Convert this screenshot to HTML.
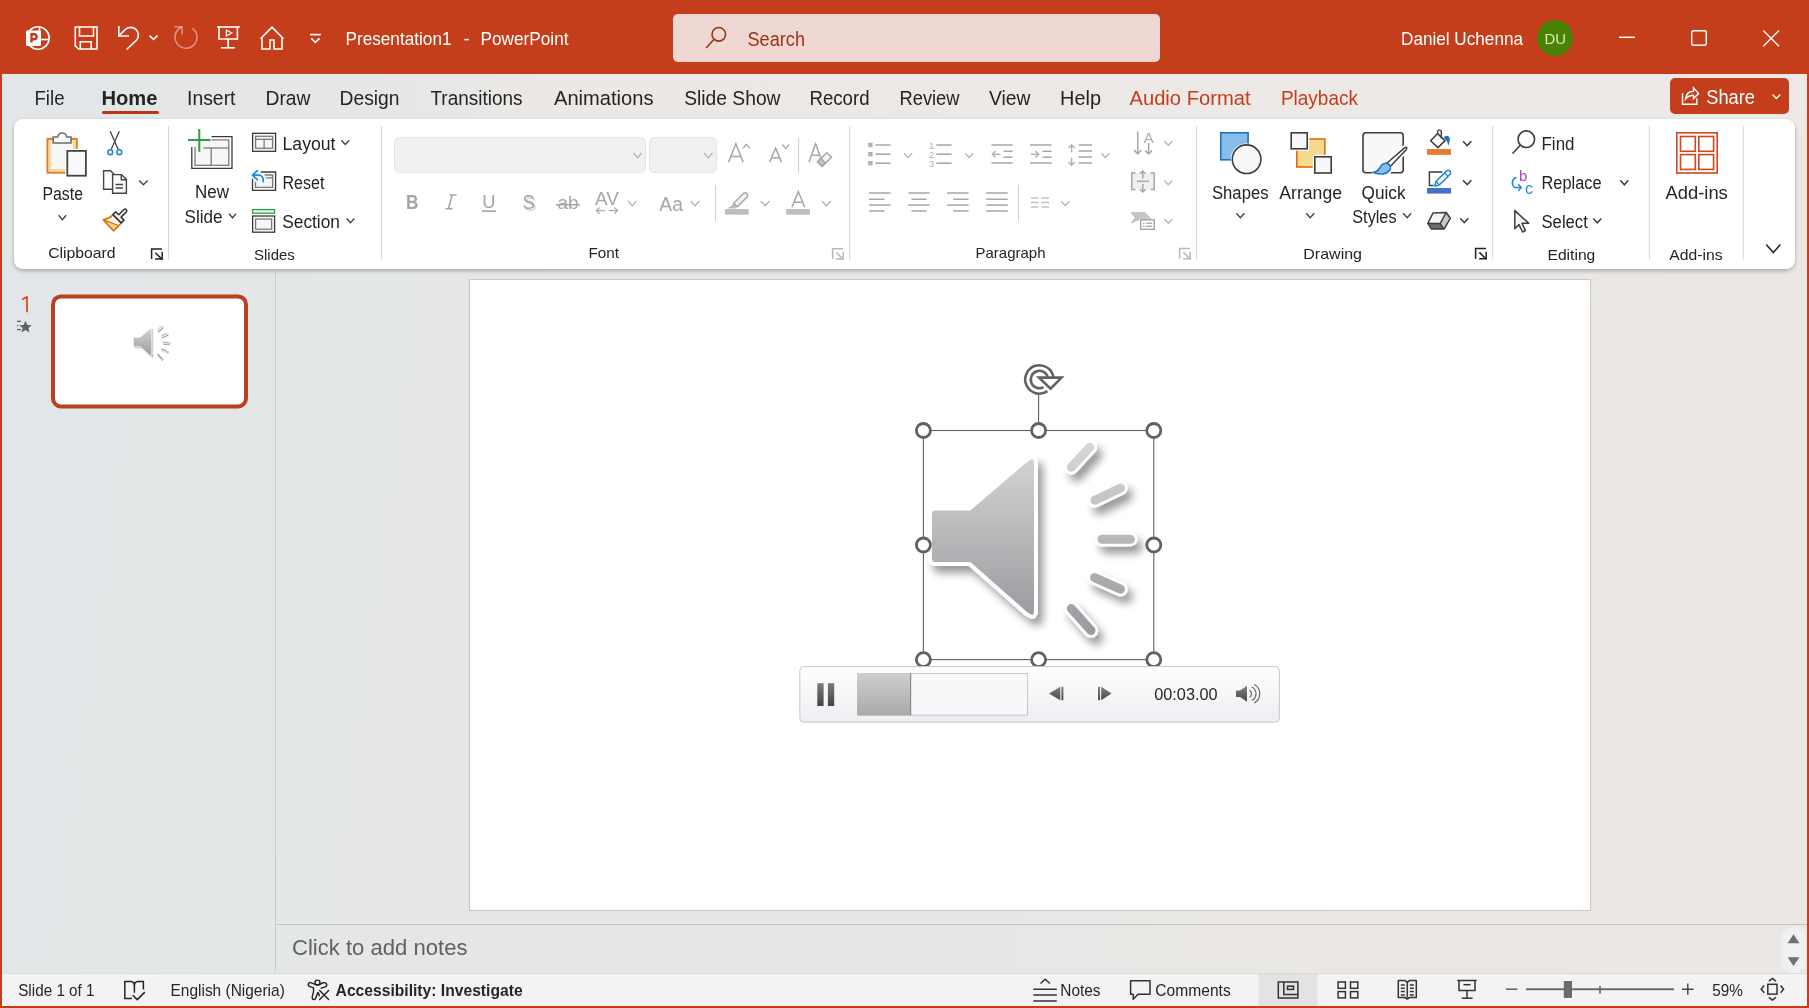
<!DOCTYPE html>
<html><head><meta charset="utf-8"><style>
html,body{margin:0;padding:0;width:1809px;height:1008px;overflow:hidden;background:#e4e6e7;}
svg{display:block;font-family:"Liberation Sans", sans-serif;will-change:transform;}
</style></head><body>
<svg width="1809" height="1008" viewBox="0 0 1809 1008">

<defs>
  <linearGradient id="bgMain" x1="0" y1="0" x2="1" y2="0.08">
    <stop offset="0" stop-color="#e2e6e8"/>
    <stop offset="0.3" stop-color="#e5e7e7"/>
    <stop offset="0.62" stop-color="#e9e7e5"/>
    <stop offset="1" stop-color="#eae7e4"/>
  </linearGradient>
  <linearGradient id="bgTabs" x1="0" y1="0" x2="1" y2="0">
    <stop offset="0" stop-color="#e2e6e8"/>
    <stop offset="0.15" stop-color="#e5e6e7"/>
    <stop offset="0.3" stop-color="#ebe8e5"/>
    <stop offset="1" stop-color="#ede9e6"/>
  </linearGradient>
  <filter id="panelShadow" x="-5%" y="-20%" width="110%" height="140%">
    <feGaussianBlur in="SourceAlpha" stdDeviation="2.2"/>
    <feOffset dy="2" result="b"/>
    <feComponentTransfer><feFuncA type="linear" slope="0.28"/></feComponentTransfer>
    <feMerge><feMergeNode/><feMergeNode in="SourceGraphic"/></feMerge>
  </filter>
</defs>
<rect x="0" y="0" width="1809" height="1008" fill="url(#bgMain)"/>
<rect x="0" y="74" width="1809" height="60" fill="url(#bgTabs)"/>
<rect x="0" y="0" width="1809" height="74" fill="#c43e1c"/>
<!-- ribbon panel -->
<rect x="14" y="119" width="1781" height="150" rx="9" ry="9" fill="#ffffff" filter="url(#panelShadow)"/>
<!-- slide panel splitter -->
<rect x="275" y="271" width="1" height="700" fill="#c9c9c9"/>
<!-- notes separator -->
<rect x="277" y="924" width="1530" height="1" fill="#c4c4c4"/>
<!-- status bar -->
<rect x="0" y="973" width="1809" height="1" fill="#dcdcdc"/>
<rect x="0" y="974" width="1809" height="34" fill="#f3f3f3"/>
<!-- scroll arrows bg -->
<rect x="1781" y="927" width="25" height="46" rx="12" fill="#f0f0f0"/>
<!-- window border -->
<rect x="0" y="0" width="2" height="1008" fill="#c43e1c"/>
<rect x="1807" y="0" width="2" height="1008" fill="#c43e1c"/>
<rect x="0" y="1006" width="1809" height="2" fill="#c43e1c"/>

<g fill="none" stroke="#fff" stroke-width="1.6"><circle cx="38" cy="38" r="11.2"/><line x1="39.5" y1="27" x2="39.5" y2="39.5"/><line x1="39.5" y1="39.5" x2="49" y2="39.5"/></g>
<rect x="26" y="30.5" width="15" height="15.5" rx="1.2" fill="#fff"/>
<path d="M31.5 42.6 V34.3 H34.2 A2.45 2.45 0 0 1 34.2 39.2 H31.5" fill="none" stroke="#c43e1c" stroke-width="2.4"/>
<g fill="none" stroke="#fff" stroke-width="1.6"><path d="M75.3 27 H97 V49 H78.5 L75.3 45.8 Z"/><path d="M79.5 27 V36 H93.5 V27"/><path d="M80.3 49 V41.8 H91.2 V49"/></g>
<g fill="none" stroke="#fff" stroke-width="1.6"><path d="M118.8 26 V36 H129"/><path d="M119.5 35.3 L125 29.8 A7.6 7.6 0 0 1 136.3 40.4 L126.5 49.5"/><path d="M149.5 35.6 L153.5 39.4 L157.5 35.6"/></g>
<g fill="none" stroke="#fff" stroke-opacity="0.45" stroke-width="1.5"><path d="M192.4 28.3 A11 11 0 1 1 181.5 27.2"/><path d="M174.3 26.8 H182 V34.6"/></g>
<g fill="none" stroke="#fff" stroke-width="1.6"><path d="M217 27 H239.8"/><path d="M219 27 V39 H237.4 V27"/><path d="M228.2 39 V47.8"/><path d="M221 47.8 H234.8"/><path d="M226.4 30 L231.8 33 L226.4 36 Z" stroke-width="1.3"/></g>
<g fill="none" stroke="#fff" stroke-width="1.6"><path d="M260.5 38.8 L272 27.2 L283.5 38.8"/><path d="M262 37.5 V49 H270 V40 H274 V49 H282 V37.5"/></g>
<g fill="none" stroke="#fff" stroke-width="1.6"><path d="M310 34.6 H320.8"/><path d="M311.3 38.4 L315.4 42.3 L319.5 38.4"/></g>
<text x="345.5" y="45.2" font-size="19" fill="#ffffff" textLength="106.0" lengthAdjust="spacingAndGlyphs">Presentation1</text>
<text x="463.5" y="45.2" font-size="19" fill="#ffffff" textLength="6.0" lengthAdjust="spacingAndGlyphs">-</text>
<text x="480.5" y="45.2" font-size="19" fill="#ffffff" textLength="88.0" lengthAdjust="spacingAndGlyphs">PowerPoint</text>
<rect x="673" y="14" width="487" height="48" rx="5" fill="#efd8d3"/>
<g fill="none" stroke="#9c3317" stroke-width="1.6"><circle cx="718.8" cy="34.3" r="6.8"/><path d="M714 39.3 L706.2 48"/></g>
<text x="747.5" y="45.9" font-size="20" fill="#9c3317" textLength="57.5" lengthAdjust="spacingAndGlyphs">Search</text>
<text x="1401.0" y="45.2" font-size="19" fill="#ffffff" textLength="122.0" lengthAdjust="spacingAndGlyphs">Daniel Uchenna</text>
<circle cx="1555" cy="38" r="18" fill="#498205"/>
<text x="1544.5" y="44.2" font-size="15.5" fill="#d8ecb9" textLength="21.5" lengthAdjust="spacingAndGlyphs">DU</text>
<g fill="none" stroke="#fff" stroke-width="1.4"><path d="M1619 37.3 H1635"/><rect x="1691.7" y="30.7" width="14.6" height="14.6" rx="2"/><path d="M1763.3 30.5 L1779 46.2 M1779 30.5 L1763.3 46.2"/></g>
<text x="34.5" y="105.3" font-size="20.5" fill="#242424" textLength="30.0" lengthAdjust="spacingAndGlyphs">File</text>
<text x="101.5" y="105.3" font-size="20.5" fill="#242424" font-weight="bold" textLength="56.0" lengthAdjust="spacingAndGlyphs">Home</text>
<text x="187.0" y="105.3" font-size="20.5" fill="#242424" textLength="48.5" lengthAdjust="spacingAndGlyphs">Insert</text>
<text x="265.5" y="105.3" font-size="20.5" fill="#242424" textLength="45.0" lengthAdjust="spacingAndGlyphs">Draw</text>
<text x="339.5" y="105.3" font-size="20.5" fill="#242424" textLength="60.0" lengthAdjust="spacingAndGlyphs">Design</text>
<text x="430.5" y="105.3" font-size="20.5" fill="#242424" textLength="92.0" lengthAdjust="spacingAndGlyphs">Transitions</text>
<text x="554.0" y="105.3" font-size="20.5" fill="#242424" textLength="99.5" lengthAdjust="spacingAndGlyphs">Animations</text>
<text x="684.2" y="105.3" font-size="20.5" fill="#242424" textLength="96.3" lengthAdjust="spacingAndGlyphs">Slide Show</text>
<text x="809.5" y="105.3" font-size="20.5" fill="#242424" textLength="60.0" lengthAdjust="spacingAndGlyphs">Record</text>
<text x="899.5" y="105.3" font-size="20.5" fill="#242424" textLength="60.0" lengthAdjust="spacingAndGlyphs">Review</text>
<text x="989.0" y="105.3" font-size="20.5" fill="#242424" textLength="41.5" lengthAdjust="spacingAndGlyphs">View</text>
<text x="1060.1" y="105.3" font-size="20.5" fill="#242424" textLength="40.9" lengthAdjust="spacingAndGlyphs">Help</text>
<text x="1129.5" y="105.3" font-size="20.5" fill="#c43e1c" textLength="121.0" lengthAdjust="spacingAndGlyphs">Audio Format</text>
<text x="1280.9" y="105.3" font-size="20.5" fill="#c43e1c" textLength="77.1" lengthAdjust="spacingAndGlyphs">Playback</text>
<rect x="102" y="111" width="57" height="3" rx="1.5" fill="#b8361a"/>
<rect x="1670" y="78" width="119" height="36" rx="5" fill="#c43e1c"/>
<g fill="none" stroke="#fff" stroke-width="1.4"><path d="M1682.5 93.3 V104.3 H1696.8 V98.2"/><path d="M1685.5 99 C1686.2 93.8 1689.5 91.2 1693.5 91.2 V87.8 L1698.6 93.6 L1693.5 98.5 V95.2 C1690.2 95.2 1687.6 96.4 1685.5 99 Z"/><path d="M1772.5 94.5 L1776.4 98.6 L1780.3 94.5"/></g>
<text x="1706.3" y="103.9" font-size="20.5" fill="#ffffff" textLength="48.7" lengthAdjust="spacingAndGlyphs">Share</text>
<rect x="47.5" y="138.9" width="29.2" height="33.7" fill="#f7f7f7" stroke="#e07a1f" stroke-width="2"/>
<rect x="50" y="141.4" width="24.2" height="28.7" fill="none" stroke="#f8d998" stroke-width="2.4"/>
<path d="M53.2 143 V137 H57.6 A4.6 4.6 0 0 1 66.7 137 H71 V143 Z" fill="#f8f8f8" stroke="#6a6a6a" stroke-width="1.5"/>
<rect x="67.3" y="150.9" width="18.6" height="24.8" fill="#f9f9f9" stroke="#ffffff" stroke-width="4"/><rect x="67.3" y="150.9" width="18.6" height="24.8" fill="#f9f9f9" stroke="#444" stroke-width="1.8"/>
<text x="42.5" y="200.4" font-size="17.5" fill="#242424" textLength="40.5" lengthAdjust="spacingAndGlyphs">Paste</text>
<path d="M58.6 215.3 L62.400000000000006 219.7 L66.2 215.3" fill="none" stroke="#444" stroke-width="1.4"/>
<g fill="none" stroke="#444" stroke-width="1.3"><path d="M110.2 131.2 L118.2 149.6"/><path d="M119.3 131.2 L111.2 149.6"/></g>
<g fill="none" stroke="#1f88d6" stroke-width="1.6"><circle cx="110.3" cy="152.2" r="2.4"/><circle cx="119.3" cy="152.2" r="2.4"/></g>
<g fill="none" stroke="#444" stroke-width="1.4"><path d="M112.5 189.3 H103.6 V170.8 H110.6 L114.3 174.5"/><path d="M112.6 174.6 H121.6 L126.4 179.4 V193.3 H112.6 Z" fill="#fafafa"/><path d="M121.3 174.8 V179.7 H126.2"/><path d="M115.5 184.5 H123 M115.5 188 H123"/></g>
<path d="M139.2 180.5 L143.39999999999998 184.8 L147.6 180.5" fill="none" stroke="#444" stroke-width="1.4"/>
<path d="M113 214.8 Q108.5 219 103.3 219.7 L113.6 230.8 L121.3 223 Z" fill="#ffffff" stroke="#e2720e" stroke-width="1.6" stroke-linejoin="round"/>
<path d="M103.5 219.9 L118.8 225.6 L113.6 230.8 Z" fill="#f8dc8c" stroke="#e2720e" stroke-width="1.5" stroke-linejoin="round"/>
<path d="M112.9 214.6 L115.7 211.8 L118.65 214.75 L123.95 209.45 A1.7 1.7 0 0 1 126.35 211.85 L121.05 217.15 L124 220.1 L121.2 222.9 Z" fill="#f6f6f6" stroke="#333" stroke-width="1.5" stroke-linejoin="round"/>
<text x="48.2" y="258.4" font-size="15" fill="#242424" textLength="67.4" lengthAdjust="spacingAndGlyphs">Clipboard</text>
<g fill="none" stroke="#222222" stroke-width="1.5" stroke-linecap="square"><path d="M161.2 248.9 H151.6 V258.3"/><path d="M155.9 253.20000000000002 L161.8 259.1"/><path d="M162.2 252.70000000000002 V259.1 H155.9"/></g>
<rect x="168.0" y="126" width="1" height="134" fill="#d6d6d6"/>
<rect x="195" y="139.8" width="33.8" height="25.5" fill="#f6f6f6"/>
<path d="M211.5 136.7 H232 V168.4 H191.8 V147" fill="none" stroke="#3a3a3a" stroke-width="1.3"/>
<g fill="none" stroke="#7a7a7a" stroke-width="1.3"><path d="M211.5 139.8 H228.8 V165.3 H195 V147"/><path d="M203.5 148 H228.8"/><path d="M211.2 148 V165.3"/></g>
<g stroke="#2f9e47" stroke-width="2"><path d="M199.3 129 V151.8"/><path d="M188 140 H210.5"/></g>
<text x="195.0" y="198.4" font-size="17.5" fill="#242424" textLength="34.0" lengthAdjust="spacingAndGlyphs">New</text>
<text x="184.5" y="222.7" font-size="17.5" fill="#242424" textLength="38.0" lengthAdjust="spacingAndGlyphs">Slide</text>
<path d="M229 213.6 L232.5 217.8 L236 213.6" fill="none" stroke="#444" stroke-width="1.4"/>
<rect x="252.6" y="133.3" width="23" height="18" fill="#f6f6f6" stroke="#3a3a3a" stroke-width="1.3"/>
<g fill="none" stroke="#7a7a7a" stroke-width="1.3"><rect x="255.6" y="136.3" width="17" height="12"/><path d="M255.6 139.3 H272.6"/><path d="M264.1 139.3 V148.3"/></g>
<text x="282.5" y="149.8" font-size="17.5" fill="#242424" textLength="53.0" lengthAdjust="spacingAndGlyphs">Layout</text>
<path d="M341.3 140.2 L345.25 144.4 L349.2 140.2" fill="none" stroke="#444" stroke-width="1.4"/>
<rect x="253" y="172.5" width="22" height="17.5" fill="#f6f6f6"/>
<path d="M260.8 172 H275.6 V190.3 H252.5 V178.8" fill="none" stroke="#3a3a3a" stroke-width="1.3"/>
<path d="M264.7 175 H272.6 V187.3 H255.5 V181.8 M266.2 177.9 H272.6" fill="none" stroke="#7a7a7a" stroke-width="1.3"/>
<rect x="251" y="168" width="13" height="14" fill="#ffffff" transform="rotate(0)" opacity="0"/>
<g fill="none" stroke="#1f88d6" stroke-width="1.7" stroke-linecap="round" stroke-linejoin="round"><path d="M257.3 170.6 L252.5 175.2 L257.3 179.7"/><path d="M252.8 175.2 H259 A4.3 4.3 0 0 1 263.2 179.5 V181.6"/></g>
<text x="282.5" y="188.8" font-size="17.5" fill="#242424" textLength="42.0" lengthAdjust="spacingAndGlyphs">Reset</text>
<rect x="252.6" y="209.6" width="22" height="3.6" fill="#f6f6f6" stroke="#2f9e47" stroke-width="1.3"/>
<rect x="252.6" y="216" width="22" height="16.2" fill="#f6f6f6" stroke="#3a3a3a" stroke-width="1.3"/>
<rect x="255.6" y="219" width="16" height="10.2" fill="none" stroke="#7a7a7a" stroke-width="1.3"/>
<text x="282.2" y="227.5" font-size="17.5" fill="#242424" textLength="57.8" lengthAdjust="spacingAndGlyphs">Section</text>
<path d="M346.6 218.6 L350.5 222.8 L354.4 218.6" fill="none" stroke="#444" stroke-width="1.4"/>
<text x="254.0" y="260.0" font-size="15" fill="#242424" textLength="40.8" lengthAdjust="spacingAndGlyphs">Slides</text>
<rect x="381.0" y="126" width="1" height="134" fill="#d6d6d6"/>
<rect x="394.5" y="137.5" width="251" height="35" rx="5" fill="#f0f0f0" stroke="#e3e3e3" stroke-width="1"/>
<path d="M633.6 153 L637.6 157.8 L641.6 153" fill="none" stroke="#b4b4b4" stroke-width="1.3"/>
<rect x="649.5" y="137.5" width="67" height="35" rx="5" fill="#f0f0f0" stroke="#e3e3e3" stroke-width="1"/>
<path d="M704.2 153 L708.3 157.8 L712.4 153" fill="none" stroke="#b4b4b4" stroke-width="1.3"/>
<path d="M728.50 162.30 L735.85 143.80 L743.20 162.30 M730.85 156.38 H740.85" fill="none" stroke="#a6a6a6" stroke-width="1.5" stroke-linejoin="miter"/>
<path d="M743 148.4 L746.4 144.3 L749.8 148.4" fill="none" stroke="#a6a6a6" stroke-width="1.3"/>
<path d="M769.60 162.30 L775.60 148.20 L781.60 162.30 M771.52 157.79 H779.68" fill="none" stroke="#a6a6a6" stroke-width="1.5" stroke-linejoin="miter"/>
<path d="M782.3 144.4 L785.8 148.6 L789.3 144.4" fill="none" stroke="#a6a6a6" stroke-width="1.3"/>
<rect x="798.1" y="137" width="1" height="35.599999999999994" fill="#d0d0d0"/>
<path d="M809 162.3 L815.6 143.8 L820.6 157.5 M811.8 155.3 H820.2" fill="none" stroke="#a6a6a6" stroke-width="1.5"/>
<path d="M817.5 161.8 L826.7 152.7 L831.7 157.3 L822.1 166.4 Z" fill="#f4f4f4" stroke="#a6a6a6" stroke-width="1.5" stroke-linejoin="round"/>
<path d="M817.5 161.8 L820.9 158.4 L825.5 163 L822.1 166.4 Z" fill="#c4c4c4" stroke="#a6a6a6" stroke-width="1.5" stroke-linejoin="round"/>
<text x="406.0" y="209.3" font-size="21" fill="#a6a6a6" font-weight="bold" textLength="12.5" lengthAdjust="spacingAndGlyphs">B</text>
<path d="M452.2 195.4 L448.4 208.4 M449.7 195 H456.7 M445.6 208.8 H452.6" fill="none" stroke="#a6a6a6" stroke-width="1.6"/>
<text x="482.3" y="208.3" font-size="19" fill="#a6a6a6" textLength="13.2" lengthAdjust="spacingAndGlyphs">U</text>
<rect x="482" y="210.3" width="14" height="1.6" fill="#a6a6a6"/>
<text x="524.0" y="210.8" font-size="21" fill="#d3d3d3" textLength="12.5" lengthAdjust="spacingAndGlyphs">S</text>
<text x="522.6" y="209.3" font-size="21" fill="#a6a6a6" textLength="12.4" lengthAdjust="spacingAndGlyphs">S</text>
<text x="557.5" y="209.3" font-size="18" fill="#a6a6a6" textLength="21.0" lengthAdjust="spacingAndGlyphs">ab</text>
<rect x="556" y="204" width="24" height="1.5" fill="#a6a6a6"/>
<text x="595.0" y="205.3" font-size="19" fill="#a6a6a6" textLength="23.7" lengthAdjust="spacingAndGlyphs">AV</text>
<g fill="none" stroke="#b0b0b0" stroke-width="1.4"><path d="M596.5 210.6 H605"/><path d="M599.6 207.5 L596.5 210.6 L599.6 213.7"/><path d="M609 210.6 H617.5"/><path d="M614.4 207.5 L617.5 210.6 L614.4 213.7"/></g>
<path d="M628.2 201 L632.3 205.8 L636.4 201" fill="none" stroke="#b4b4b4" stroke-width="1.3"/>
<text x="659.3" y="210.6" font-size="20" fill="#a6a6a6" textLength="23.7" lengthAdjust="spacingAndGlyphs">Aa</text>
<path d="M690.8 201 L695.0999999999999 205.8 L699.4 201" fill="none" stroke="#b4b4b4" stroke-width="1.3"/>
<rect x="715.1" y="185" width="1" height="36" fill="#d0d0d0"/>
<rect x="725" y="209" width="23.7" height="5.6" fill="#bdbdbd"/>
<path d="M733.7 203.2 L737.3 206.8 L735 208.6 H727.5 Z" fill="#c0c0c0"/>
<path d="M733.7 203.2 L743.7 193.2 A2.6 2.6 0 0 1 747.3 196.8 L737.3 206.8 Z" fill="#f4f4f4" stroke="#a6a6a6" stroke-width="1.5" stroke-linejoin="round"/>
<path d="M760.8 201 L765.2 205.8 L769.6 201" fill="none" stroke="#b4b4b4" stroke-width="1.3"/>
<path d="M791.80 207.30 L798.30 191.60 L804.80 207.30 M793.88 202.28 H802.72" fill="none" stroke="#a6a6a6" stroke-width="1.5" stroke-linejoin="miter"/>
<rect x="786.2" y="209" width="23.7" height="5.6" fill="#bdbdbd"/>
<path d="M822 201 L826.4 205.8 L830.8 201" fill="none" stroke="#b4b4b4" stroke-width="1.3"/>
<text x="588.5" y="258.4" font-size="15" fill="#242424" textLength="30.5" lengthAdjust="spacingAndGlyphs">Font</text>
<g fill="none" stroke="#b8b8b8" stroke-width="1.5" stroke-linecap="square"><path d="M842.2 248.79999999999998 H832.6 V258.2"/><path d="M836.9 253.1 L842.8 259.0"/><path d="M843.2 252.6 V259.0 H836.9"/></g>
<rect x="849.2" y="126" width="1" height="134" fill="#d6d6d6"/>
<rect x="868.2" y="142.8" width="4.4" height="4.4" fill="#b0b0b0"/>
<rect x="875.3" y="144.25" width="15.200000000000045" height="1.5" fill="#a6a6a6"/>
<rect x="868.2" y="152.0" width="4.4" height="4.4" fill="#b0b0b0"/>
<rect x="875.3" y="153.45" width="15.200000000000045" height="1.5" fill="#a6a6a6"/>
<rect x="868.2" y="161.0" width="4.4" height="4.4" fill="#b0b0b0"/>
<rect x="875.3" y="162.45" width="15.200000000000045" height="1.5" fill="#a6a6a6"/>
<path d="M904 153.2 L908.1 157.5 L912.2 153.2" fill="none" stroke="#b4b4b4" stroke-width="1.3"/>
<text x="929" y="148.6" font-size="9.5" fill="#b0b0b0">1</text>
<rect x="936.3" y="144.25" width="15.300000000000068" height="1.5" fill="#a6a6a6"/>
<text x="929" y="157.79999999999998" font-size="9.5" fill="#b0b0b0">2</text>
<rect x="936.3" y="153.45" width="15.300000000000068" height="1.5" fill="#a6a6a6"/>
<text x="929" y="166.79999999999998" font-size="9.5" fill="#b0b0b0">3</text>
<rect x="936.3" y="162.45" width="15.300000000000068" height="1.5" fill="#a6a6a6"/>
<path d="M965.2 153.2 L969.2 157.5 L973.2 153.2" fill="none" stroke="#b4b4b4" stroke-width="1.3"/>
<rect x="991.4" y="144.25" width="21.200000000000045" height="1.5" fill="#a6a6a6"/>
<rect x="1003.5" y="150.55" width="9.100000000000023" height="1.5" fill="#a6a6a6"/>
<rect x="1003.5" y="156.45" width="9.100000000000023" height="1.5" fill="#a6a6a6"/>
<rect x="991.4" y="162.25" width="21.200000000000045" height="1.5" fill="#a6a6a6"/>
<g fill="none" stroke="#b0b0b0" stroke-width="1.4"><path d="M992.5 154.2 H1000.5"/><path d="M995.5 151 L992.3 154.2 L995.5 157.4"/></g>
<rect x="1030" y="144.25" width="21.59999999999991" height="1.5" fill="#a6a6a6"/>
<rect x="1042.5" y="150.55" width="9.099999999999909" height="1.5" fill="#a6a6a6"/>
<rect x="1042.5" y="156.45" width="9.099999999999909" height="1.5" fill="#a6a6a6"/>
<rect x="1030" y="162.25" width="21.59999999999991" height="1.5" fill="#a6a6a6"/>
<g fill="none" stroke="#b0b0b0" stroke-width="1.4"><path d="M1030.5 154.2 H1038.5"/><path d="M1035.5 151 L1038.7 154.2 L1035.5 157.4"/></g>
<rect x="1078.6" y="144.25" width="13.400000000000091" height="1.5" fill="#a6a6a6"/>
<rect x="1078.6" y="150.25" width="13.400000000000091" height="1.5" fill="#a6a6a6"/>
<rect x="1078.6" y="156.25" width="13.400000000000091" height="1.5" fill="#a6a6a6"/>
<rect x="1078.6" y="162.25" width="13.400000000000091" height="1.5" fill="#a6a6a6"/>
<g fill="none" stroke="#b0b0b0" stroke-width="1.4"><path d="M1071.6 145 V152.2 M1071.6 157.8 V165"/><path d="M1068.5 148 L1071.6 144.8 L1074.7 148"/><path d="M1068.5 162 L1071.6 165.2 L1074.7 162"/></g>
<path d="M1101.4 153.2 L1105.4 157.5 L1109.4 153.2" fill="none" stroke="#b4b4b4" stroke-width="1.3"/>
<g fill="none" stroke="#a6a6a6" stroke-width="1.5"><path d="M1137.7 131.5 V154"/><path d="M1134 150 L1137.7 154 L1141.4 150"/><path d="M1148.6 143 V154"/><path d="M1145.2 150.6 L1148.6 154 L1152 150.6"/></g>
<text x="1143.5" y="142.5" font-size="14" fill="#b0b0b0" textLength="10.3" lengthAdjust="spacingAndGlyphs">A</text>
<path d="M1164.2 141 L1168.3000000000002 145.3 L1172.4 141" fill="none" stroke="#b4b4b4" stroke-width="1.3"/>
<rect x="1131.5" y="173" width="23" height="16.5" fill="#f0f0f0"/>
<g fill="none" stroke="#a6a6a6" stroke-width="1.5"><path d="M1135.5 173 H1131.8 V189.5 H1135.5"/><path d="M1150.5 173 H1154.2 V189.5 H1150.5"/><path d="M1137 181.3 H1149"/><path d="M1142.8 171 V178.5 M1140 173.8 L1142.8 171 L1145.6 173.8"/><path d="M1142.8 184 V192 M1140 189.2 L1142.8 192 L1145.6 189.2"/></g>
<path d="M1164.2 180.4 L1168.3000000000002 184.7 L1172.4 180.4" fill="none" stroke="#b4b4b4" stroke-width="1.3"/>
<path d="M1131.4 212.8 H1145 L1151.5 219.5 H1140.5 L1136.5 216.2 L1139 219.5 L1131.4 222.7 L1135.5 217.5 Z" fill="#c8c8c8" stroke="#b5b5b5" stroke-width="1"/>
<rect x="1140.7" y="219.8" width="13.5" height="9.5" fill="#fff" stroke="#a6a6a6" stroke-width="1.4"/>
<g fill="#a6a6a6"><rect x="1143" y="222.6" width="1.6" height="1.3"/><rect x="1146" y="222.6" width="6" height="1.3"/><rect x="1143" y="225.6" width="1.6" height="1.3"/><rect x="1146" y="225.6" width="6" height="1.3"/></g>
<path d="M1164.2 219 L1168.3000000000002 223.3 L1172.4 219" fill="none" stroke="#b4b4b4" stroke-width="1.3"/>
<rect x="869" y="192.25" width="21.5" height="1.5" fill="#a6a6a6"/>
<rect x="869" y="198.45" width="15.5" height="1.5" fill="#a6a6a6"/>
<rect x="869" y="204.35" width="21.5" height="1.5" fill="#a6a6a6"/>
<rect x="869" y="210.25" width="15.5" height="1.5" fill="#a6a6a6"/>
<rect x="908.3" y="192.25" width="21.300000000000068" height="1.5" fill="#a6a6a6"/>
<rect x="911.5" y="198.45" width="15.0" height="1.5" fill="#a6a6a6"/>
<rect x="908.3" y="204.35" width="21.300000000000068" height="1.5" fill="#a6a6a6"/>
<rect x="911.5" y="210.25" width="15.0" height="1.5" fill="#a6a6a6"/>
<rect x="947.2" y="192.25" width="21.399999999999977" height="1.5" fill="#a6a6a6"/>
<rect x="953.2" y="198.45" width="15.399999999999977" height="1.5" fill="#a6a6a6"/>
<rect x="947.2" y="204.35" width="21.399999999999977" height="1.5" fill="#a6a6a6"/>
<rect x="953.2" y="210.25" width="15.399999999999977" height="1.5" fill="#a6a6a6"/>
<rect x="986.2" y="192.25" width="21.5" height="1.5" fill="#a6a6a6"/>
<rect x="986.2" y="198.45" width="21.5" height="1.5" fill="#a6a6a6"/>
<rect x="986.2" y="204.35" width="21.5" height="1.5" fill="#a6a6a6"/>
<rect x="986.2" y="210.25" width="21.5" height="1.5" fill="#a6a6a6"/>
<rect x="1018.0" y="185" width="1" height="35.69999999999999" fill="#d0d0d0"/>
<rect x="1030.8" y="197.3" width="7.7000000000000455" height="1.4" fill="#c0c0c0"/>
<rect x="1041.3" y="197.3" width="7.7000000000000455" height="1.4" fill="#c0c0c0"/>
<rect x="1030.8" y="201.8" width="7.7000000000000455" height="1.4" fill="#c0c0c0"/>
<rect x="1041.3" y="201.8" width="7.7000000000000455" height="1.4" fill="#c0c0c0"/>
<rect x="1030.8" y="206.3" width="7.7000000000000455" height="1.4" fill="#c0c0c0"/>
<rect x="1041.3" y="206.3" width="7.7000000000000455" height="1.4" fill="#c0c0c0"/>
<path d="M1061.2 201.2 L1065.3000000000002 205.5 L1069.4 201.2" fill="none" stroke="#b4b4b4" stroke-width="1.3"/>
<text x="975.5" y="258.4" font-size="15" fill="#242424" textLength="70.0" lengthAdjust="spacingAndGlyphs">Paragraph</text>
<g fill="none" stroke="#b8b8b8" stroke-width="1.5" stroke-linecap="square"><path d="M1189.2 248.6 H1179.6 V258"/><path d="M1183.9 252.9 L1189.8 258.8"/><path d="M1190.2 252.4 V258.8 H1183.9"/></g>
<rect x="1196.0" y="126" width="1" height="134" fill="#d6d6d6"/>
<rect x="1220.8" y="132.8" width="27.3" height="27" fill="#88bdea" stroke="#1a73c8" stroke-width="1.6"/>
<circle cx="1246.6" cy="159.2" r="15.8" fill="#ffffff"/>
<circle cx="1246.6" cy="159.2" r="14.3" fill="#f8f8f8" stroke="#3d3d3d" stroke-width="1.6"/>
<text x="1212.0" y="198.8" font-size="17.5" fill="#242424" textLength="56.5" lengthAdjust="spacingAndGlyphs">Shapes</text>
<path d="M1236.4 213.3 L1240.4 217.7 L1244.4 213.3" fill="none" stroke="#444" stroke-width="1.4"/>
<rect x="1296.8" y="139" width="28" height="28" fill="#f8da8c" stroke="#e06c10" stroke-width="1.6"/>
<rect x="1291.2" y="132.8" width="16" height="16" fill="#f8f8f8" stroke="#ffffff" stroke-width="4"/>
<rect x="1314.8" y="156.8" width="16.4" height="16.2" fill="#f8f8f8" stroke="#ffffff" stroke-width="4"/>
<rect x="1291.2" y="132.8" width="16" height="16" fill="#f8f8f8" stroke="#3d3d3d" stroke-width="1.6"/>
<rect x="1314.8" y="156.8" width="16.4" height="16.2" fill="#f8f8f8" stroke="#3d3d3d" stroke-width="1.6"/>
<text x="1279.3" y="198.8" font-size="17.5" fill="#242424" textLength="62.7" lengthAdjust="spacingAndGlyphs">Arrange</text>
<path d="M1306.2 213.3 L1310.2 217.7 L1314.2 213.3" fill="none" stroke="#444" stroke-width="1.4"/>
<rect x="1363" y="132.8" width="40.2" height="40" rx="3" fill="#f8f8f8" stroke="#3d3d3d" stroke-width="1.6"/>
<path d="M1386.5 163.5 L1404.8 147.6 Q1407.6 146.3 1406.4 149.6 L1389.8 167" fill="none" stroke="#ffffff" stroke-width="5"/>
<path d="M1372.5 172.3 C1377 172.5 1378.5 170 1380 167.5 C1381.5 164.5 1384.5 162.5 1387.5 163.5 C1390.5 164.5 1391.5 168 1389.5 170.5 C1387 174 1380 175.5 1372.5 172.3 Z" fill="none" stroke="#ffffff" stroke-width="5"/>
<path d="M1386.5 163.5 L1404.8 147.6 Q1407.6 146.3 1406.4 149.6 L1389.8 167 Z" fill="#ffffff" stroke="#3d3d3d" stroke-width="1.5" stroke-linejoin="round"/>
<path d="M1372.5 172.3 C1377 172.5 1378.5 170 1380 167.5 C1381.5 164.5 1384.5 162.5 1387.5 163.5 C1390.5 164.5 1391.5 168 1389.5 170.5 C1387 174 1380 175.5 1372.5 172.3 Z" fill="#88bdea" stroke="#1a73c8" stroke-width="1.5"/>
<text x="1361.5" y="198.8" font-size="17.5" fill="#242424" textLength="44.0" lengthAdjust="spacingAndGlyphs">Quick</text>
<text x="1352.3" y="222.8" font-size="17.5" fill="#242424" textLength="44.2" lengthAdjust="spacingAndGlyphs">Styles</text>
<path d="M1403.2 213.3 L1407.2 217.7 L1411.2 213.3" fill="none" stroke="#444" stroke-width="1.4"/>
<rect x="1427" y="149" width="24" height="5.8" fill="#e97b2e"/>
<path d="M1430.6 140.8 L1437.6 133.6 L1445 140.6 L1438 147.6 Z" fill="#f8f8f8" stroke="#3d3d3d" stroke-width="1.5" stroke-linejoin="round"/>
<path d="M1437.6 133.6 V131.2 Q1439.5 128.6 1441.3 131.2 V138.3" fill="none" stroke="#3d3d3d" stroke-width="1.4"/>
<path d="M1443.6 137.2 Q1447.2 134 1449.6 137.6 Q1450.4 141.5 1448.6 145.6 Q1447.6 140.8 1443.6 137.2 Z" fill="#1a6fc4"/>
<path d="M1463 141.3 L1467.2 145.6 L1471.4 141.3" fill="none" stroke="#3d3d3d" stroke-width="1.5"/>
<rect x="1427" y="188" width="24" height="5.6" fill="#4472c4"/>
<path d="M1442.3 172 H1429.4 V185.6 H1433.6" fill="none" stroke="#3d3d3d" stroke-width="1.5"/>
<path d="M1434.8 186 L1435.9 181.5 L1446.5 171.1 A2.4 2.4 0 0 1 1449.9 174.5 L1439.3 184.9 Z" fill="#ffffff" stroke="#1f88d6" stroke-width="1.5" stroke-linejoin="round"/>
<path d="M1444.6 173 L1448 176.4 M1435.9 181.5 L1439.3 184.9" fill="none" stroke="#1f88d6" stroke-width="1.3"/>
<path d="M1463 180.3 L1467.2 184.6 L1471.4 180.3" fill="none" stroke="#3d3d3d" stroke-width="1.5"/>
<path d="M1433.1 212.9 L1446.2 212.5 L1440.2 223.6 L1427.8 223.3 Z" fill="#f5f5f5"/>
<path d="M1446.2 212.5 L1450.3 218.3 L1444 229.1 L1440.2 223.6 Z" fill="#c9c9c9"/>
<path d="M1427.8 223.3 L1440.2 223.6 L1444 229.1 L1431.5 229.1 Z" fill="#6e6e6e"/>
<path d="M1433.1 212.9 L1446.2 212.5 L1450.3 218.3 L1444 229.1 L1431.5 229.1 L1427.8 223.3 Z M1427.8 223.3 L1440.2 223.6 L1446.2 212.5 M1440.2 223.6 L1444 229.1" fill="none" stroke="#3d3d3d" stroke-width="1.5" stroke-linejoin="round"/>
<path d="M1460.2 218.3 L1464.3000000000002 222.6 L1468.4 218.3" fill="none" stroke="#3d3d3d" stroke-width="1.5"/>
<text x="1303.3" y="258.5" font-size="15" fill="#242424" textLength="58.7" lengthAdjust="spacingAndGlyphs">Drawing</text>
<g fill="none" stroke="#222222" stroke-width="1.5" stroke-linecap="square"><path d="M1485.2 248.6 H1475.6 V258"/><path d="M1479.9 252.9 L1485.8 258.8"/><path d="M1486.2 252.4 V258.8 H1479.9"/></g>
<rect x="1492.2" y="126" width="1" height="134" fill="#d6d6d6"/>
<g fill="none" stroke="#3d3d3d" stroke-width="1.6"><circle cx="1526.3" cy="139.2" r="8.3"/><path d="M1520.3 145.2 L1512.5 153.5"/></g>
<text x="1541.5" y="150.0" font-size="17.5" fill="#242424" textLength="33.0" lengthAdjust="spacingAndGlyphs">Find</text>
<text x="1519" y="181.4" font-size="15" fill="#b146c2">b</text>
<text x="1525" y="193.8" font-size="16" fill="#1f88d6">c</text>
<g fill="none" stroke="#1f88d6" stroke-width="1.5"><path d="M1516.5 177.5 C1512 178.5 1510.8 184.5 1514.5 187.5 H1521"/><path d="M1518.3 184.3 L1521.3 187.5 L1518.3 190.7"/></g>
<text x="1541.5" y="188.6" font-size="17.5" fill="#242424" textLength="60.0" lengthAdjust="spacingAndGlyphs">Replace</text>
<path d="M1620.3 180.2 L1624.35 184.8 L1628.4 180.2" fill="none" stroke="#3d3d3d" stroke-width="1.5"/>
<path d="M1514.8 210.6 V228.8 L1519 224.6 L1522.6 232 L1525.4 230.6 L1522 223.3 H1528.8 Z" fill="#f5f5f5" stroke="#3d3d3d" stroke-width="1.5" stroke-linejoin="round"/>
<text x="1541.5" y="228.0" font-size="17.5" fill="#242424" textLength="46.3" lengthAdjust="spacingAndGlyphs">Select</text>
<path d="M1593.3 218.5 L1597.3 222.8 L1601.3 218.5" fill="none" stroke="#3d3d3d" stroke-width="1.5"/>
<text x="1547.5" y="259.5" font-size="15" fill="#242424" textLength="47.8" lengthAdjust="spacingAndGlyphs">Editing</text>
<rect x="1648.9" y="126" width="1" height="134" fill="#d6d6d6"/>
<g fill="none" stroke="#d3461d" stroke-width="1.6"><rect x="1676.8" y="132.8" width="40.4" height="40.2"/><rect x="1680.5" y="136.5" width="14.8" height="14.8"/><rect x="1698.8" y="136.5" width="14.8" height="14.8"/><rect x="1680.5" y="154.6" width="14.8" height="14.8"/><rect x="1698.8" y="154.6" width="14.8" height="14.8"/></g>
<text x="1665.5" y="198.5" font-size="17.5" fill="#242424" textLength="62.3" lengthAdjust="spacingAndGlyphs">Add-ins</text>
<text x="1669.3" y="259.5" font-size="15" fill="#242424" textLength="53.2" lengthAdjust="spacingAndGlyphs">Add-ins</text>
<rect x="1742.8" y="126" width="1" height="134" fill="#d6d6d6"/>
<path d="M1766.2 244.5 L1773.3000000000002 252.6 L1780.4 244.5" fill="none" stroke="#2a2a2a" stroke-width="1.6"/>
<path d="M27 296.2 V312.2 M27 296.8 L22.2 299.6" fill="none" stroke="#d04522" stroke-width="1.7"/>
<path d="M25.5 320.8 L27.4 325 L31.8 325.3 L28.4 328.1 L29.5 332.6 L25.5 330.1 L21.5 332.6 L22.6 328.1 L19.2 325.3 L23.6 325 Z" fill="#606060"/>
<g fill="#606060"><rect x="17" y="320.7" width="4" height="1.3"/><rect x="17" y="325" width="1.3" height="1.3"/><rect x="17" y="328.9" width="4" height="1.3"/></g>
<rect x="53" y="296.4" width="193" height="110" rx="8" fill="#ffffff" stroke="#b8411f" stroke-width="4"/>
<use href="#spkG" transform="translate(-27.50 249.23) scale(0.173)"/>
<rect x="469.5" y="279.5" width="1121" height="631" fill="#ffffff" stroke="#c8c8c8" stroke-width="1"/>
<text x="292.0" y="954.7" font-size="22.5" fill="#616161" textLength="175.5" lengthAdjust="spacingAndGlyphs">Click to add notes</text>
<path d="M1787.6 943.2 L1793.5 934.3 L1799.5 943.2 Z" fill="#707070"/>
<path d="M1787.6 957.3 L1793.5 966 L1799.5 957.3 Z" fill="#707070"/>
<defs>
<linearGradient id="spk" x1="0" y1="0" x2="0" y2="1">
  <stop offset="0" stop-color="#d3d3d5"/><stop offset="1" stop-color="#9c9ca0"/>
</linearGradient>
<linearGradient id="spkL" gradientUnits="userSpaceOnUse" x1="0" y1="445" x2="0" y2="635">
  <stop offset="0" stop-color="#d6d6d8"/><stop offset="1" stop-color="#9a9a9e"/>
</linearGradient>
<filter id="dsh" x="-30%" y="-30%" width="160%" height="160%">
  <feGaussianBlur in="SourceAlpha" stdDeviation="4.5"/>
  <feOffset dx="5" dy="7" result="o"/>
  <feComponentTransfer in="o" result="o2"><feFuncA type="linear" slope="0.4"/></feComponentTransfer>
  <feMerge><feMergeNode in="o2"/><feMergeNode in="SourceGraphic"/></feMerge>
</filter>
</defs>
<g id="spkG" filter="url(#dsh)"><path d="M935.4 508.4 H969.6 L1026 460.3 Q1036 452.5 1036 464.5 V609.5 Q1036 621.5 1026 613.7 L969.6 563.9 H935.4 Q929.9 563.9 929.9 558.4 V513.9 Q929.9 508.4 935.4 508.4 Z" fill="url(#spk)" stroke="#ffffff" stroke-width="4" stroke-linejoin="round"/>
<path d="M1071.3 467.3 L1089.8 447.3" stroke="#ffffff" stroke-width="14.5" stroke-linecap="round"/>
<path d="M1095 500.3 L1120.5 488" stroke="#ffffff" stroke-width="14.5" stroke-linecap="round"/>
<path d="M1102 539.2 L1130.3 539.2" stroke="#ffffff" stroke-width="14.5" stroke-linecap="round"/>
<path d="M1094.5 577.6 L1120.5 589.2" stroke="#ffffff" stroke-width="14.5" stroke-linecap="round"/>
<path d="M1071.3 608.6 L1091 630.6" stroke="#ffffff" stroke-width="14.5" stroke-linecap="round"/>
<path d="M1071.3 467.3 L1089.8 447.3" stroke="url(#spkL)" stroke-width="9" stroke-linecap="round"/>
<path d="M1095 500.3 L1120.5 488" stroke="url(#spkL)" stroke-width="9" stroke-linecap="round"/>
<path d="M1102 539.2 L1130.3 539.2" stroke="url(#spkL)" stroke-width="9" stroke-linecap="round"/>
<path d="M1094.5 577.6 L1120.5 589.2" stroke="url(#spkL)" stroke-width="9" stroke-linecap="round"/>
<path d="M1071.3 608.6 L1091 630.6" stroke="url(#spkL)" stroke-width="9" stroke-linecap="round"/>
</g>
<rect x="923.4" y="430.5" width="230.4" height="229.1" fill="none" stroke="#616161" stroke-width="1.1"/>
<path d="M1038.6 395 V430.4" stroke="#616161" stroke-width="1.1"/>
<circle cx="923.4" cy="430.5" r="7" fill="#ffffff" stroke="#616161" stroke-width="2.8"/>
<circle cx="1038.6" cy="430.5" r="7" fill="#ffffff" stroke="#616161" stroke-width="2.8"/>
<circle cx="1153.8" cy="430.5" r="7" fill="#ffffff" stroke="#616161" stroke-width="2.8"/>
<circle cx="923.4" cy="545" r="7" fill="#ffffff" stroke="#616161" stroke-width="2.8"/>
<circle cx="1153.8" cy="545" r="7" fill="#ffffff" stroke="#616161" stroke-width="2.8"/>
<circle cx="923.4" cy="659.6" r="7" fill="#ffffff" stroke="#616161" stroke-width="2.8"/>
<circle cx="1038.6" cy="659.6" r="7" fill="#ffffff" stroke="#616161" stroke-width="2.8"/>
<circle cx="1153.8" cy="659.6" r="7" fill="#ffffff" stroke="#616161" stroke-width="2.8"/>
<g fill="none" stroke="#616161" stroke-width="2.6"><path d="M1053.5 377.5 A14.2 14.2 0 1 0 1047.4 391.2"/><path d="M1047.9 377.5 A8.7 8.7 0 1 0 1043.5 387.2"/><path d="M1039 377.6 H1061.5 L1050.6 388.6 Z" fill="#ffffff" stroke-linejoin="miter"/></g>
<defs>
<linearGradient id="mbar" x1="0" y1="0" x2="0" y2="1"><stop offset="0" stop-color="#ffffff"/><stop offset="1" stop-color="#edeef1"/></linearGradient>
<linearGradient id="mfill" x1="0" y1="0" x2="0" y2="1"><stop offset="0" stop-color="#d0cecd"/><stop offset="1" stop-color="#aaa8a9"/></linearGradient>
<linearGradient id="mpause" x1="0" y1="0" x2="0" y2="1"><stop offset="0" stop-color="#7c7c7c"/><stop offset="1" stop-color="#444444"/></linearGradient>
<linearGradient id="micon" x1="0" y1="0" x2="0" y2="1"><stop offset="0" stop-color="#808080"/><stop offset="1" stop-color="#4a4a4a"/></linearGradient>
</defs>
<rect x="799.8" y="666.6" width="479.6" height="55.6" rx="4" fill="url(#mbar)" stroke="#c6c9cd" stroke-width="1"/>
<rect x="817.3" y="683.2" width="6.3" height="22.8" fill="url(#mpause)"/>
<rect x="827.9" y="683.2" width="6.3" height="22.8" fill="url(#mpause)"/>
<rect x="857.5" y="673.5" width="170" height="41.6" fill="#f7f8fa" stroke="#c4c7cb" stroke-width="1"/>
<rect x="857.2" y="673.2" width="53.3" height="42.2" fill="url(#mfill)"/>
<rect x="910" y="673.2" width="1.2" height="42.2" fill="#8a8a8a"/>
<path d="M1049 693.5 L1060.3 686.8 V700.2 Z" fill="url(#micon)"/>
<rect x="1061.4" y="686.8" width="2" height="13.4" fill="url(#micon)"/>
<rect x="1098" y="686.8" width="2" height="13.4" fill="url(#micon)"/>
<path d="M1111.5 693.5 L1101.2 686.8 V700.2 Z" fill="url(#micon)"/>
<text x="1154.3" y="699.9" font-size="16.5" fill="#262626" textLength="63.2" lengthAdjust="spacingAndGlyphs">00:03.00</text>
<path d="M1236 690.5 H1240 L1247 685.8 V701.8 L1240 697 H1236 Z" fill="url(#micon)"/>
<g fill="none" stroke="#6a6a6a" stroke-width="1.2"><path d="M1249.5 690 A4.5 4.5 0 0 1 1249.5 697.5"/><path d="M1251.8 687 A7.5 7.5 0 0 1 1251.8 700.5"/><path d="M1254.2 684.5 A10.5 10.5 0 0 1 1254.2 703"/></g>
<text x="18.2" y="996.0" font-size="17" fill="#262626" textLength="76.4" lengthAdjust="spacingAndGlyphs">Slide 1 of 1</text>
<g fill="none" stroke="#222" stroke-width="1.5" stroke-linejoin="round"><path d="M131.9 998.6 H124.8 V981.5 H131 Q134.4 981.8 134.4 985.5 V992.7"/><path d="M134.4 985.5 Q134.4 981.8 137.8 981.5 H143.4 V989.6"/><path d="M132.7 995.2 L137.3 999.6 L144.8 992.1"/></g>
<text x="170.5" y="996.0" font-size="17" fill="#262626" textLength="114.3" lengthAdjust="spacingAndGlyphs">English (Nigeria)</text>
<g fill="none" stroke="#222" stroke-width="1.4" stroke-linecap="round" stroke-linejoin="round"><circle cx="317.5" cy="982.6" r="2.5"/><path d="M321.2 988.2 L325.5 986.8 Q327.5 985.5 326.3 983.5 Q325 982 322.5 983 L319.8 984.3 Q317.5 985.2 315.2 984.3 L311.5 982.8 Q309 982 308.3 984 Q307.8 986 310 986.6 L313.6 987.8 Q314 992 312.3 996.5 Q311.8 999.3 313.8 999.6 Q315.5 999.7 316 997.5 L317.4 993.2 Q318 992.2 318.6 993.2 L319.3 995.8"/><path d="M319.6 990.5 L328.6 999.5 M328.6 990.5 L319.6 999.5"/></g>
<text x="335.6" y="996.0" font-size="17" fill="#262626" font-weight="bold" textLength="187.0" lengthAdjust="spacingAndGlyphs">Accessibility: Investigate</text>
<g fill="none" stroke="#333" stroke-width="1.5"><path d="M1040.5 983.5 L1045.2 979.3 L1049.9 983.5"/><path d="M1033.3 989.2 H1056.8 M1033.3 995 H1056.8 M1033.3 1001 H1056.8"/></g>
<text x="1060.3" y="996.0" font-size="17" fill="#262626" textLength="40.3" lengthAdjust="spacingAndGlyphs">Notes</text>
<path d="M1130.6 980.7 H1150 V994.2 H1138 L1133.2 999.2 V994.2 H1130.6 Z" fill="none" stroke="#333" stroke-width="1.5" stroke-linejoin="round"/>
<text x="1155.3" y="996.0" font-size="17" fill="#262626" textLength="75.4" lengthAdjust="spacingAndGlyphs">Comments</text>
<rect x="1258.3" y="974" width="59.4" height="32" fill="#e3e3e3"/>
<g fill="none" stroke="#333" stroke-width="1.5"><rect x="1278.3" y="982" width="19.6" height="16"/><path d="M1283.8 982 V994.6 H1297.9"/><rect x="1287.5" y="986.2" width="6" height="3.2"/></g>
<g fill="none" stroke="#333" stroke-width="1.5"><rect x="1338.1" y="982" width="7.3" height="6.3"/><rect x="1350.5" y="982" width="7.3" height="6.3"/><rect x="1338.1" y="991.6" width="7.3" height="6.3"/><rect x="1350.5" y="991.6" width="7.3" height="6.3"/></g>
<g fill="none" stroke="#333" stroke-width="1.5" stroke-linejoin="round"><path d="M1398.3 980.4 H1405 L1407.3 982.5 L1409.6 980.4 H1416.3 V997.5 H1409.6 L1407.3 999 L1405 997.5 H1398.3 Z"/><path d="M1407.3 982.5 V997.5"/><path d="M1400.8 985 H1404.8 M1400.8 988.3 H1404.8 M1400.8 991.6 H1404.8 M1400.8 994.9 H1404.8 M1409.8 985 H1413.8 M1409.8 988.3 H1413.8 M1409.8 991.6 H1413.8 M1409.8 994.9 H1413.8"/></g>
<g fill="none" stroke="#333" stroke-width="1.5"><path d="M1457.3 980.5 H1476.7"/><path d="M1459 980.5 V990.5 H1475 V980.5"/><path d="M1463.5 984.7 H1470.5"/><path d="M1467 990.5 V998"/><path d="M1461.8 998.2 H1472.6"/></g>
<rect x="1506" y="988.5" width="11.3" height="1.4" fill="#555"/>
<rect x="1526" y="988.3" width="148" height="1.9" fill="#666"/>
<rect x="1599.2" y="985.9" width="1.6" height="7.8" fill="#666"/>
<rect x="1563.8" y="981" width="8.2" height="16.9" fill="#6b6b6b"/>
<path d="M1682 989.2 H1693.5 M1687.8 983.6 V994.8" stroke="#444" stroke-width="1.4"/>
<text x="1712.2" y="996.0" font-size="17" fill="#262626" textLength="30.6" lengthAdjust="spacingAndGlyphs">59%</text>
<g fill="none" stroke="#333" stroke-width="1.5"><rect x="1767.8" y="984.3" width="9.2" height="9.8"/><path d="M1768.8 981.2 L1772.4 978.4 L1776 981.2"/><path d="M1768.8 997.3 L1772.4 1000.1 L1776 997.3"/><path d="M1764.2 985.6 L1761.2 989.2 L1764.2 992.8"/><path d="M1780.6 985.6 L1783.6 989.2 L1780.6 992.8"/></g>
</svg></body></html>
